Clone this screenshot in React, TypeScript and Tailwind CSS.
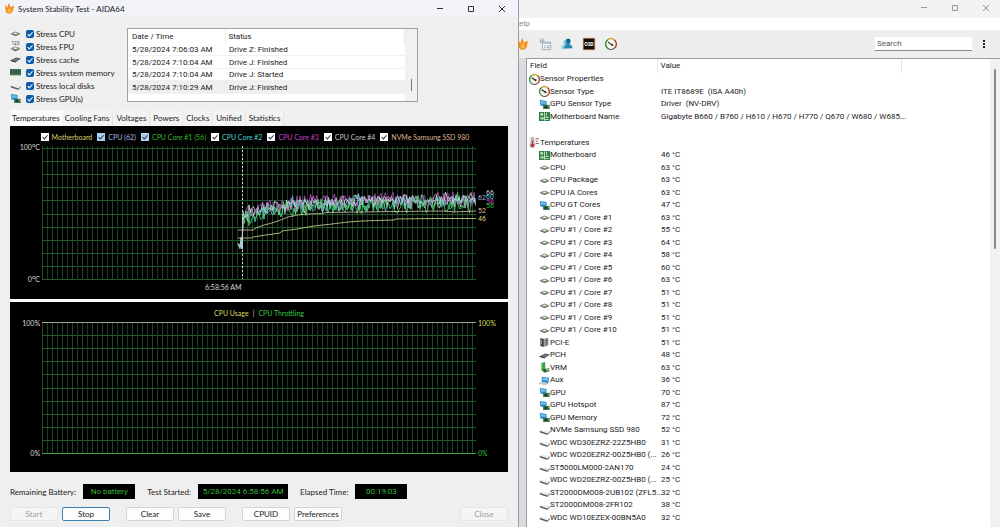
import type { ReactNode } from "react";

type IconName =
  | "chip" | "fpu" | "cache" | "memory" | "disk" | "gpu" | "gauge" | "board"
  | "thermo" | "pcie" | "vrm" | "aux" | "flame" | "report" | "users" | "osd";

const shapes: Record<IconName, ReactNode> = {
  chip: (
    <>
      <path d="M1 8.6 8 5.8l7 2.8-7 3.2z" fill="#3c4438" />
      <path d="M1 7.9 8 5l7 2.9-7 2.9z" fill="#7d9474" />
      <path d="M4.6 7.8 8 6.5l3.4 1.3L8 9.2z" fill="#e9efe0" />
    </>
  ),
  fpu: (
    <>
      <text x="8" y="6.4" fontSize="7" textAnchor="middle" fill="#333" fontFamily="Noto Sans">123</text>
      <path d="M1 11.4 8 8.4l7 3L8 15z" fill="#3c4438" />
      <path d="M1 10.6 8 7.8l7 2.8-7 3z" fill="#8aa082" />
      <path d="M4.6 10.6 8 9.2l3.4 1.4L8 12z" fill="#e9efe0" />
    </>
  ),
  cache: (
    <>
      <path d="M0 9.5 9 5l7 1.6-8 5.4z" fill="#4d5052" />
      <path d="M3 9 9.4 6l4 .9-6 3.5z" fill="#777b7d" />
      <path d="M1 9.500 8 11.800" stroke="#333" strokeWidth="1.200" />
    </>
  ),
  memory: (
    <>
      <path d="M0 3h16v9H0z" fill="#2e6b45" />
      <path d="M2 4.6h3v4H2zM6.500 4.600h3v4h-3zM11 4.600h3v4h-3z" fill="#3f5a4a" />
      <path d="M1 11.500h14" stroke="#a9b58a" strokeDasharray="1 1" />
    </>
  ),
  disk: (
    <>
      <path d="M1 8.500 4.500 7l11 1.800-3 3.600z" fill="#ececec" />
      <path d="m1 8.500 11.500 3.900v2L1.400 10.800z" fill="#5a5a5a" />
      <path d="m12.500 12.400 3-3.600v2.200l-3 3.400z" fill="#7a7a7a" />
    </>
  ),
  gpu: (
    <>
      <path d="M1 1.500 11 3v8L2 9.500z" fill="#2a8ccb" />
      <path d="m2 2.800 8 1.200v2.500L2.500 7z" fill="#6cc0ea" />
      <path d="M6 8.500h9.500v6H6z" fill="#2f7a45" />
      <path d="M8 10h4v3H8z" fill="#23313c" />
      <path d="M13 11h2" stroke="#c8cf60" />
    </>
  ),
  gauge: (
    <>
      <circle cx="8" cy="8" r="7" fill="#f7f7ee" />
      <path d="M4 14A7.200 7.200 0 0 1 4 2" fill="none" stroke="#3f8f3a" strokeWidth="2" />
      <path d="M4 2a7.200 7.200 0 0 1 8.500.400" fill="none" stroke="#c9a93a" strokeWidth="2" />
      <path d="M12.500 2.400A7.200 7.200 0 0 1 12 14" fill="none" stroke="#a8452f" strokeWidth="2" />
      <path d="M4 14a7.200 7.200 0 0 0 8 0" fill="none" stroke="#55524a" strokeWidth="1.600" />
      <path d="M4 5.500 10 9.500" stroke="#222" strokeWidth="1.600" />
      <circle cx="9.500" cy="9.200" r="1.500" fill="#333" />
    </>
  ),
  board: (
    <>
      <path d="M0 1.500h16v13H0z" fill="#2c7d40" />
      <path d="M2 3h4v4H2zM2 9h5v3.500H2zM9 8.500h5V10H9zM9 11.500h5V13H9z" fill="#b8dcb8" />
      <path d="M8 2v12M11 2.500v4.500" stroke="#dcefdc" strokeWidth="1.200" />
    </>
  ),
  thermo: (
    <>
      <path d="M3 2.500a2 2 0 0 1 4 0V9a3.500 3.500 0 1 1-4 0z" fill="#d9d3d3" stroke="#8a7474" />
      <path d="M4.200 5h1.600v5H4.200z" fill="#b5322e" />
      <circle cx="5" cy="12" r="2.400" fill="#b5322e" />
      <path d="M9.500 2.500h5M9.500 6h3.500M9.500 9.500h5" stroke="#7d6868" strokeWidth="1.400" />
    </>
  ),
  pcie: (
    <>
      <path d="M2 1.500 7 3v11.500L2 13z" fill="#3a3a3a" />
      <path d="M7.500 2.500 13.500 1v11l-6 2.500z" fill="#8c8c8c" />
      <path d="M11.500 3.500v7.500" stroke="#444" />
      <path d="M3.500 4v7" stroke="#ccc" />
    </>
  ),
  vrm: (
    <>
      <path d="M3 1.500 9 0v12l-6 1z" fill="#36a043" />
      <path d="M3 1.500 5 1v11.700l-2 .3z" fill="#79d27b" />
      <path d="M5 10.500 15 9v4.500L7 15.500z" fill="#27652f" />
      <path d="m11 10.500 3-.5v2l-3 .6z" fill="#d8e8d0" />
    </>
  ),
  aux: (
    <>
      <path d="M4 2.500 15 4l-1.500 8L4 10z" fill="#2f8fd0" />
      <path d="m5.500 4 8 1-.800 3.500L5.500 7z" fill="#7cc6ef" />
      <path d="m0 12.500 5-2.500 8 2-4 2.500z" fill="#c9ced2" stroke="#8e979d" strokeWidth=".5" />
    </>
  ),
  flame: (
    <>
      <path d="M2 3c1 1.500 1.800 2.500 2.600 4C5.500 4 5.500 2 8 0c-.300 3 .500 4.500 1.500 6C11 5.500 12.500 4.500 15 4c-1.500 2-1 4-1.800 7-.700 3-3 4.500-5.700 4.500-3 0-5-2-5.300-5C2 8 1.500 5.500 2 3z" fill="#f28a1d" />
      <path d="M5 9c1.500 0 2-1.500 2.800-3 .700 2 1.500 3 3.200 3 0 3-1 5-3.500 5S4.500 11.500 5 9z" fill="#fdb83b" />
    </>
  ),
  report: (
    <>
      <path d="M2 1v6M5 0v7M1 4h6" stroke="#9fb0b8" strokeWidth="1.500" />
      <path d="M4.500 5.500h11v10h-11z" fill="#fafafa" stroke="#8295a0" />
      <path d="M5 6h10v2H5z" fill="#a9c3d3" />
      <path d="M6.500 10.500h2M10 10.500h4M6.500 13h2M10 13h4" stroke="#68808e" />
    </>
  ),
  users: (
    <>
      <path d="M0 14.500c.500-3.500 2-5.500 4-6C2 5.500 3.500 2.500 6 2.500L11 14.500z" fill="#8fd0e6" />
      <path d="M4 13.500c.500-3 1.500-4.500 3.500-5C5 5.500 6 .500 9.500.500S13.500 5.500 11.500 8.500c2.500.500 3.500 2.500 4 5z" fill="#2389b3" />
      <path d="M7 3c1-2.500 5-2.500 5.500.500L10.500 7z" fill="#155b7c" />
    </>
  ),
  osd: (
    <>
      <path d="M.5.5h15v15H.5z" fill="#15120d" stroke="#b2552a" />
      <text x="8" y="10.300" fontSize="6" fontWeight="bold" textAnchor="middle" fill="#fff" fontFamily="Noto Sans">OSD</text>
    </>
  ),
};

function Icon({ name, className = "size-[11px]" }: { name: IconName; className?: string }) {
  return (
    <svg viewBox="0 0 16 16" aria-hidden="true" className={`shrink-0 overflow-visible ${className}`}>
      {shapes[name]}
    </svg>
  );
}

function Check({ className, mark }: { className: string; mark: string }) {
  return (
    <span className="relative flex size-2 shrink-0">
      <input type="checkbox" defaultChecked className={`peer size-2 appearance-none ${className}`} />
      <svg viewBox="0 0 10 10" className="pointer-events-none absolute inset-0 hidden size-2 peer-checked:block">
        <path d="M2 5.200 4.200 7.400 8.200 2.800" fill="none" stroke={mark} strokeWidth="1.300" />
      </svg>
    </span>
  );
}

function WindowButtons({ color }: { color: string }) {
  return (
    <div className={`flex items-center gap-[23px] ${color}`}>
      <button aria-label="Minimize" className="size-2">
        <svg viewBox="0 0 8 8" className="size-2"><path d="M1 3.500h6" stroke="currentColor" /></svg>
      </button>
      <button aria-label="Maximize" className="size-2">
        <svg viewBox="0 0 8 8" className="size-2"><path d="M1.500 1.500h5v5h-5z" fill="none" stroke="currentColor" /></svg>
      </button>
      <button aria-label="Close window" className="size-2">
        <svg viewBox="0 0 8 8" className="size-2"><path d="m1 1 6 6M7 1 1 7" stroke="currentColor" /></svg>
      </button>
    </div>
  );
}

const stressItems: { icon: IconName; label: string }[] = [
  { icon: "chip", label: "Stress CPU" },
  { icon: "fpu", label: "Stress FPU" },
  { icon: "cache", label: "Stress cache" },
  { icon: "memory", label: "Stress system memory" },
  { icon: "disk", label: "Stress local disks" },
  { icon: "gpu", label: "Stress GPU(s)" },
];

const events = [
  ["5/28/2024 7:06:03 AM", "Drive Z: Finished"],
  ["5/28/2024 7:10:04 AM", "Drive J: Finished"],
  ["5/28/2024 7:10:04 AM", "Drive J: Started"],
  ["5/28/2024 7:10:29 AM", "Drive J: Finished"],
];

const tabs = ["Temperatures", "Cooling Fans", "Voltages", "Powers", "Clocks", "Unified", "Statistics"];

const legend = [
  { label: "Motherboard", color: "text-[#d8d070]", box: "bg-white" },
  { label: "CPU (62)", color: "text-[#a9b4e0]", box: "bg-[#a9d0f5]" },
  { label: "CPU Core #1 (56)", color: "text-[#35b835]", box: "bg-[#a9d0f5]" },
  { label: "CPU Core #2", color: "text-[#45cfd0]", box: "bg-white" },
  { label: "CPU Core #3", color: "text-[#c840c8]", box: "bg-white" },
  { label: "CPU Core #4", color: "text-[#c8c8c8]", box: "bg-white" },
  { label: "NVMe Samsung SSD 980", color: "text-[#dfb58c]", box: "bg-white" },
];

const PLOT_W = 434;
const PLOT_H = 134;
const tempToY = (t: number) => 133 - t * 1.31;

function noise(seed: number) {
  let s = seed;
  return () => {
    s = (s * 1103515245 + 12345) % 2147483648;
    return s / 2147483648;
  };
}

function coreLine(seed: number, base: number, spread: number) {
  const rand = noise(seed);
  const points = [`196,${tempToY(27)}`, `198,${tempToY(22 + rand() * 4)}`, `199,${tempToY(32 - rand() * 5)}`, `200,${tempToY(23)}`];
  for (let x = 201; x <= PLOT_W; x += 1.5) {
    const warm = 1 - Math.exp(-(x - 199) / 42);
    const mean = base - 12 + 12 * warm;
    const spike = rand() > 0.94 ? 3 : 0;
    points.push(`${x},${tempToY(mean + (rand() - 0.5) * spread + spike).toFixed(1)}`);
  }
  return points.join(" ");
}

const cores = [
  { color: "#d0d0d8", points: coreLine(91, 59, 12) },
  { color: "#c848c8", points: coreLine(17, 61, 11) },
  { color: "#5fd8d8", points: coreLine(53, 58, 12) },
  { color: "#4fdc6a", points: coreLine(29, 57, 13) },
  { color: "#c9cfe8", points: coreLine(71, 60, 7) },
];

const ssd = "196,84 211,84 214,82 222,79 230,77 236,75 246,71 256,69 264,68 281,67.500 283,66.500 320,66 350,65.500 404,65 412,66 434,65";
const board = "196,92 210,92 211,91 224,89 238,87 240,85 255,83 272,80 290,78 306,76 320,75 352,74 354,73 392,72.500 434,72.500";

const readouts = [
  { text: "62", temp: 62, left: "left-0.5", color: "text-[#a9b4e0]" },
  { text: "66", temp: 66, left: "left-2.5", color: "text-[#d0d0d0]" },
  { text: "60", temp: 62.5, left: "left-2.5", color: "text-[#45cfd0]" },
  { text: "58", temp: 59, left: "left-2.5", color: "text-[#c840c8]" },
  { text: "56", temp: 55.5, left: "left-2.5", color: "text-[#35b835]" },
  { text: "52", temp: 52, left: "left-0.5", color: "text-[#dfc08c]" },
  { text: "46", temp: 46, left: "left-0.5", color: "text-[#d8d070]" },
];

function GridLines({ top, bottom }: { top: number; bottom: number }) {
  const step = (bottom - top) / 10;
  return (
    <g shapeRendering="crispEdges">
      {Array.from({ length: 87 }, (_, i) => (
        <path key={i} d={`M${i * 5 + 0.5} 0V${bottom}`} stroke={i % 2 ? "#1d3a22" : "#1c4c26"} />
      ))}
      {Array.from({ length: 11 }, (_, i) => (
        <path key={i} d={`M0 ${Math.round(top + i * step) + 0.5}H${PLOT_W}`} stroke="#1f5a2a" />
      ))}
    </g>
  );
}

function TemperatureChart() {
  return (
    <section className="flex h-[173px] flex-col bg-black pt-1.5 text-[7px] leading-[10px]">
      <div className="flex justify-center gap-[5px] pr-2">
        {legend.map((s) => (
          <label key={s.label} className={`flex items-center gap-[3px] whitespace-nowrap ${s.color}`}>
            <Check className={s.box} mark="#334" />
            {s.label}
          </label>
        ))}
      </div>
      <div className="mt-1 grid h-[134px] grid-cols-[32px_1fr_32px]">
        <div className="-my-1 flex flex-col justify-between pr-0.5 text-right leading-[10px] text-[#d8d8d8]">
          <span>100<sup className="text-[6px]">o</sup>C</span>
          <span>0<sup className="text-[6px]">o</sup>C</span>
        </div>
        <svg viewBox={`0 0 ${PLOT_W} ${PLOT_H}`} preserveAspectRatio="none" className="h-full w-full">
          <GridLines top={2} bottom={133} />
          <g fill="none" strokeWidth="0.8" strokeLinejoin="round">
            {cores.map((c) => (
              <polyline key={c.color} points={c.points} stroke={c.color} />
            ))}
            <polyline points={ssd} stroke="#dfc8a8" />
            <polyline points={board} stroke="#d8d890" />
          </g>
          <path d="M200.500 0V133" stroke="#d0d0d0" strokeDasharray="2 2" />
        </svg>
        <div className="relative font-['Roboto',sans-serif] leading-[8px]">
          {readouts.map((r) => (
            <span
              key={r.text}
              className={`absolute -translate-y-1/2 ${r.left} ${r.color}`}
              style={{ top: `${(tempToY(r.temp) / PLOT_H) * 100}%` }}
            >
              {r.text}
            </span>
          ))}
        </div>
      </div>
      <div className="mx-8 mt-0.5">
        <p className="w-[46%] text-right text-[#d8d8d8]">6:58:56 AM</p>
      </div>
    </section>
  );
}

function UsageChart() {
  return (
    <section className="mt-[3px] flex h-[170px] flex-col bg-black pt-1.5 text-[7px] leading-[10px]">
      <p className="flex justify-center gap-1 text-[#d8d8d8]">
        <span className="text-[#d8d860]">CPU Usage</span>|<span className="text-[#35c845]">CPU Throttling</span>
      </p>
      <div className="mt-1 grid h-[132px] grid-cols-[32px_1fr_32px]">
        <div className="-my-1 flex flex-col justify-between pr-0.5 text-right text-[#d8d8d8]">
          <span>100%</span>
          <span>0%</span>
        </div>
        <svg viewBox={`0 0 ${PLOT_W} 132`} preserveAspectRatio="none" className="h-full w-full">
          <GridLines top={0} bottom={131} />
          <path d={`M0 .5H${PLOT_W}`} stroke="#98a880" />
          <path d={`M0 131.500H${PLOT_W}`} stroke="#38a048" />
        </svg>
        <div className="-my-1 flex flex-col justify-between pl-0.5">
          <span className="text-[#d8d860]">100%</span>
          <span className="text-[#35b845]">0%</span>
        </div>
      </div>
    </section>
  );
}

const buttonBase = "h-[14px] w-12 rounded-[2px] border text-center leading-[11px]";
const readoutBox = "ml-[7px] bg-black text-center font-['Roboto',sans-serif] leading-[15px] text-[#35b835]";

function StabilityTest() {
  return (
    <main className="flex w-[51.8%] shrink-0 flex-col bg-[#efefef]">
      <header className="flex h-[17px] items-center bg-[#f1f3f9] pr-3 pl-1">
        <Icon name="flame" />
        <h1 className="ml-[3px] flex-1">System Stability Test - AIDA64</h1>
        <WindowButtons color="text-[#333]" />
      </header>

      <div className="flex items-end pt-[10px] pl-2.5">
        <ul className="w-[117px]">
          {stressItems.map((s) => (
            <li key={s.label}>
              <label className="flex h-[13px] items-center whitespace-nowrap">
                <Icon name={s.icon} />
                <span className="mr-0.5 ml-[5px] flex">
                  <Check className="rounded-[2px] bg-[#0a5cab]" mark="#fff" />
                </span>
                {s.label}
              </label>
            </li>
          ))}
        </ul>
        <div className="mb-[3px] flex h-[74px] w-[291px] justify-between border border-[#a0a0a0] bg-white">
          <table className="h-[65px] w-[277px] table-fixed font-['Roboto',sans-serif]">
            <thead>
              <tr className="h-[15px] text-left">
                <th className="w-[97px] pl-1 font-normal">Date / Time</th>
                <th className="border-x border-[#ececec] pl-[3px] font-normal">Status</th>
              </tr>
            </thead>
            <tbody>
              {events.map(([time, status], i) => (
                <tr key={i} className="border-b border-[#f0f0f0] leading-[11px] last:bg-[#efefef]">
                  <td className="pl-1">{time}</td>
                  <td className="pl-1">{status}</td>
                </tr>
              ))}
            </tbody>
          </table>
          <div className="flex w-3 justify-center bg-[#f1f1f1] pt-[50px]">
            <div className="h-3 w-px bg-[#777]" />
          </div>
        </div>
      </div>

      <div className="px-2.5">
        <nav className="mt-[5px] flex h-4">
          {tabs.map((t, i) => (
            <button
              key={t}
              className={i === 0 ? "bg-[#fbfbfb] px-0.5 pb-px whitespace-nowrap" : "border-r border-[#e6e6e6] bg-[#f3f3f3] px-[3px] whitespace-nowrap"}
            >
              {t}
            </button>
          ))}
        </nav>
        <div className="bg-white">
          <TemperatureChart />
          <UsageChart />
        </div>

        <dl className="mt-3 flex h-[15px] items-center">
          <dt>Remaining Battery:</dt>
          <dd className={`w-[52px] ${readoutBox}`}>No battery</dd>
          <dt className="ml-3">Test Started:</dt>
          <dd className={`w-[90px] ${readoutBox}`}>5/28/2024 6:58:56 AM</dd>
          <dt className="ml-3">Elapsed Time:</dt>
          <dd className={`w-[52px] ${readoutBox}`}>00:19:03</dd>
        </dl>

        <div className="mt-2 flex gap-1">
          <button disabled className={`${buttonBase} border-[#e6e6e6] bg-[#f5f5f5] text-[#a0a0a0]`}>Start</button>
          <button className={`${buttonBase} mr-3 border-[#3c7fb1] bg-[#fdfdfd]`}>Stop</button>
          <button className={`${buttonBase} border-[#d4d4d4] bg-[#fdfdfd]`}>Clear</button>
          <button className={`${buttonBase} mr-3 border-[#d4d4d4] bg-[#fdfdfd]`}>Save</button>
          <button className={`${buttonBase} border-[#d4d4d4] bg-[#fdfdfd]`}>CPUID</button>
          <button className={`${buttonBase} border-[#d4d4d4] bg-[#fdfdfd]`}>Preferences</button>
          <button disabled className={`${buttonBase} ml-auto border-[#e6e6e6] bg-[#f5f5f5] text-[#a0a0a0]`}>Close</button>
        </div>
      </div>
    </main>
  );
}

type Row = { icon: IconName; field: string; value?: string; group?: boolean } | null;

const rows: Row[] = [
  { icon: "gauge", field: "Sensor Properties", group: true },
  { icon: "gauge", field: "Sensor Type", value: "ITE IT8689E  (ISA A40h)" },
  { icon: "gpu", field: "GPU Sensor Type", value: "Driver  (NV-DRV)" },
  { icon: "board", field: "Motherboard Name", value: "Gigabyte B660 / B760 / H610 / H670 / H770 / Q670 / W680 / W685..." },
  null,
  { icon: "thermo", field: "Temperatures", group: true },
  { icon: "board", field: "Motherboard", value: "46 °C" },
  { icon: "chip", field: "CPU", value: "63 °C" },
  { icon: "chip", field: "CPU Package", value: "63 °C" },
  { icon: "chip", field: "CPU IA Cores", value: "63 °C" },
  { icon: "gpu", field: "CPU GT Cores", value: "47 °C" },
  { icon: "chip", field: "CPU #1 / Core #1", value: "63 °C" },
  { icon: "chip", field: "CPU #1 / Core #2", value: "55 °C" },
  { icon: "chip", field: "CPU #1 / Core #3", value: "64 °C" },
  { icon: "chip", field: "CPU #1 / Core #4", value: "58 °C" },
  { icon: "chip", field: "CPU #1 / Core #5", value: "60 °C" },
  { icon: "chip", field: "CPU #1 / Core #6", value: "63 °C" },
  { icon: "chip", field: "CPU #1 / Core #7", value: "51 °C" },
  { icon: "chip", field: "CPU #1 / Core #8", value: "51 °C" },
  { icon: "chip", field: "CPU #1 / Core #9", value: "51 °C" },
  { icon: "chip", field: "CPU #1 / Core #10", value: "51 °C" },
  { icon: "pcie", field: "PCI-E", value: "51 °C" },
  { icon: "cache", field: "PCH", value: "48 °C" },
  { icon: "vrm", field: "VRM", value: "63 °C" },
  { icon: "aux", field: "Aux", value: "36 °C" },
  { icon: "gpu", field: "GPU", value: "70 °C" },
  { icon: "gpu", field: "GPU Hotspot", value: "87 °C" },
  { icon: "gpu", field: "GPU Memory", value: "72 °C" },
  { icon: "disk", field: "NVMe Samsung SSD 980", value: "52 °C" },
  { icon: "disk", field: "WDC WD30EZRZ-22Z5HB0", value: "31 °C" },
  { icon: "disk", field: "WDC WD20EZRZ-00Z5HB0 (...", value: "26 °C" },
  { icon: "disk", field: "ST5000LM000-2AN170", value: "24 °C" },
  { icon: "disk", field: "WDC WD20EZRZ-00Z5HB0 (...", value: "25 °C" },
  { icon: "disk", field: "ST2000DM008-2UB102 (ZFL5...", value: "32 °C" },
  { icon: "disk", field: "ST2000DM008-2FR102", value: "38 °C" },
  { icon: "disk", field: "WDC WD10EZEX-00BN5A0", value: "32 °C" },
];

function SensorWindow() {
  return (
    <aside className="flex min-w-0 flex-1 flex-col border-l border-[#9a9aa2] bg-[#dcdce0] font-['Roboto',sans-serif]">
      <header className="flex h-[18px] items-center justify-end bg-[#f2f2f2] pr-2.5 pb-0.5">
        <WindowButtons color="text-[#999]" />
      </header>
      <div className="h-3 bg-white leading-3 text-[#888]">elp</div>
      <div className="flex h-7 items-center bg-[#eeeeef] pr-3">
        <div className="flex flex-1 items-center gap-[10px]">
          <Icon name="flame" className="-ml-0.5 size-3" />
          <Icon name="report" className="size-3" />
          <Icon name="users" className="size-3" />
          <Icon name="osd" className="size-3" />
          <Icon name="gauge" className="size-3" />
        </div>
        <input
          aria-label="Search"
          placeholder="Search"
          className="h-[14px] w-[97px] border-b border-[#8a8a8a] bg-white px-0.5 placeholder:text-[#555]"
        />
        <button aria-label="More" className="ml-2 flex size-2 items-center justify-center">
          <svg viewBox="0 0 8 10" className="h-2.5 w-2">
            <path d="M3 1h2v2H3zM3 4h2v2H3zM3 7h2v2H3z" fill="#222" />
          </svg>
        </button>
      </div>
      <div className="ml-[7px] flex flex-1 border-t border-l border-[#9a9aa2] bg-white">
        <div className="min-w-0 flex-1">
          <table className="w-full table-fixed whitespace-pre">
            <thead>
              <tr className="h-[14px] text-left leading-[14px]">
                <th className="w-[130px] pl-[3px] font-normal">Field</th>
                <th className="w-[244px] border-x border-[#e4e4e4] pl-[3px] font-normal">Value</th>
                <th />
              </tr>
            </thead>
            <tbody className="leading-3">
              {rows.map((r, i) =>
                r ? (
                  <tr key={i} className="odd:h-3 even:h-[13px]">
                    <td className={r.group ? "pl-0.5" : "pl-3"}>
                      <span className="flex items-center">
                        <Icon name={r.icon} />
                        {r.field}
                      </span>
                    </td>
                    <td className="pl-1" colSpan={2}>{r.value}</td>
                  </tr>
                ) : (
                  <tr key={i} className="h-[13px]">
                    <td colSpan={3} />
                  </tr>
                ),
              )}
            </tbody>
          </table>
        </div>
        <div className="flex w-2.5 justify-center bg-[#f1f1f1] pt-2.5">
          <div className="h-[180px] w-0.5 rounded bg-[#888]" />
        </div>
      </div>
    </aside>
  );
}

export default function App() {
  return (
    <div className="flex min-h-screen overflow-hidden bg-[#efefef] font-['Lato','Noto_Sans',sans-serif] text-[8px] text-[#222]">
      <StabilityTest />
      <SensorWindow />
    </div>
  );
}
